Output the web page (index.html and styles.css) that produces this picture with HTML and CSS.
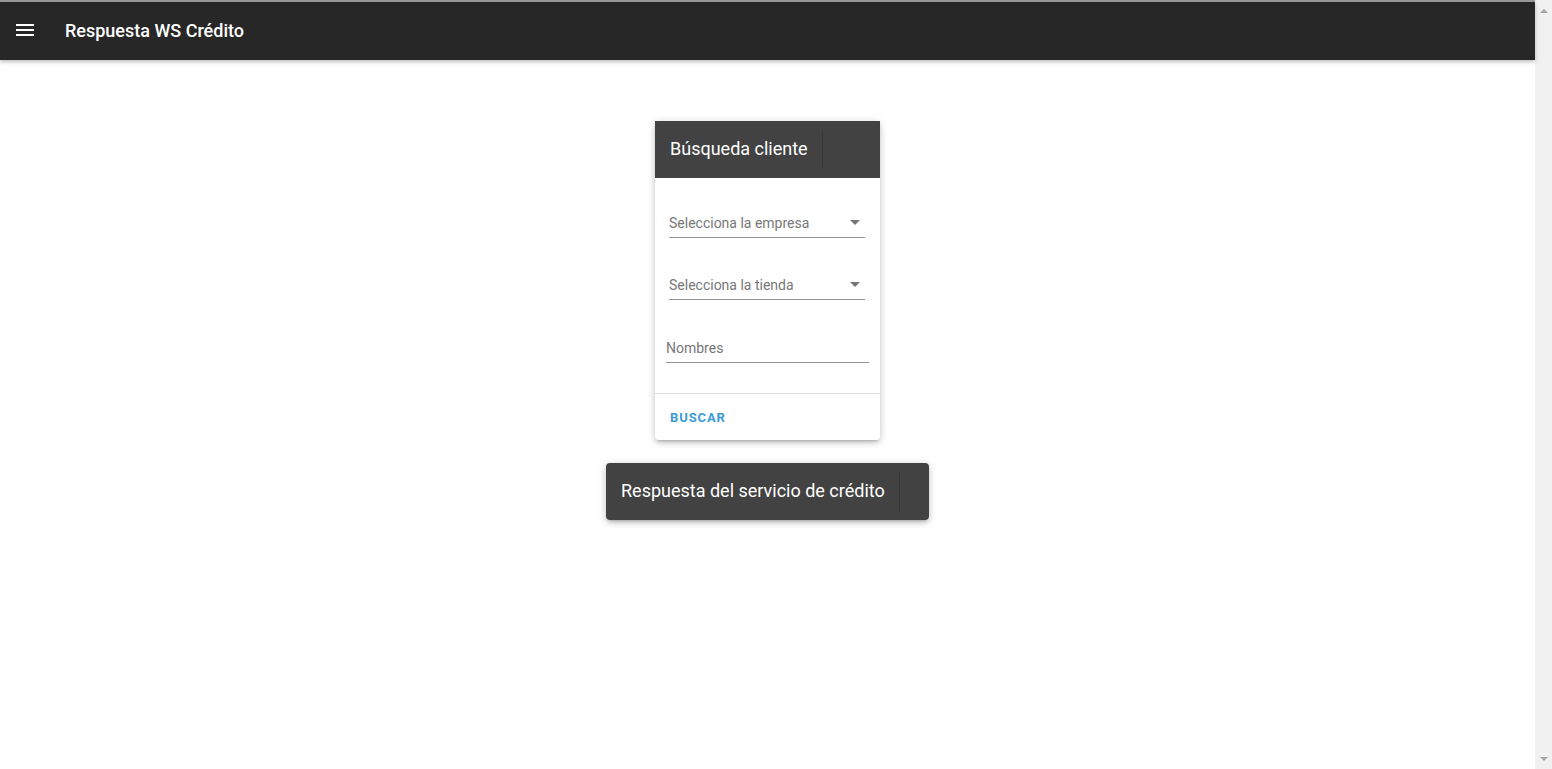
FILE: index.html
```html
<!DOCTYPE html>
<html lang="es">
<head>
<meta charset="utf-8">
<title>Respuesta WS Crédito</title>
<link rel="stylesheet" href="styles.css">
</head>
<body>
<div class="window">
  <div class="app">
    <header class="toolbar">
      <button class="menu-btn" aria-label="menu">
        <svg width="24" height="24" viewBox="0 0 24 24"><path fill="#fff" d="M3 18h18v-2H3v2zm0-5h18v-2H3v2zm0-7v2h18V6H3z"/></svg>
      </button>
      <span class="toolbar-title">Respuesta WS Crédito</span>
    </header>
    <main class="content">
      <section class="card search-card">
        <div class="card-header"><span class="card-title">Búsqueda cliente</span></div>
        <div class="card-body">
          <div class="field select-field"><span class="field-label">Selecciona la empresa</span><span class="arrow"></span></div>
          <div class="field select-field"><span class="field-label">Selecciona la tienda</span><span class="arrow"></span></div>
          <div class="field input-field"><span class="field-label">Nombres</span></div>
        </div>
        <div class="card-footer"><span class="btn-text">BUSCAR</span></div>
      </section>
      <section class="card result-card">
        <div class="card-header"><span class="card-title">Respuesta del servicio de crédito</span></div>
      </section>
    </main>
  </div>
  <div class="scrollbar">
    <span class="sb-arrow up"></span>
    <span class="sb-track"></span>
    <span class="sb-arrow down"></span>
  </div>
</div>
</body>
</html>
```
FILE: styles.css
```css
* { box-sizing: border-box; }
html, body { margin: 0; padding: 0; height: 100%; }
body {
  font-family: Roboto, "Noto Sans", "Liberation Sans", sans-serif;
  background: #fff;
  overflow: hidden;
}
.window {
  display: flex;
  height: 769px;
}
.app {
  flex: 1;
  display: flex;
  flex-direction: column;
  border-top: 2px solid #9a9a9a;
}
.toolbar {
  height: 58px;
  background: #272727;
  display: flex;
  align-items: center;
  padding-left: 13px;
  padding-bottom: 2px;
  box-shadow: 0 2px 4px rgba(0,0,0,0.25);
  position: relative;
  z-index: 2;
}
.menu-btn {
  background: none;
  border: 0;
  padding: 0;
  width: 24px;
  height: 24px;
  display: flex;
}
.toolbar-title {
  color: #fff;
  font-size: 18px;
  font-weight: 500;
  margin-left: 28px;
  letter-spacing: 0;
}
.content {
  flex: 1;
  display: flex;
  flex-direction: column;
  align-items: center;
  padding-top: 61px;
}
.card {
  background: #fff;
  border-radius: 4px;
  box-shadow: 0 3px 3px -2px rgba(0,0,0,0.2), 0 3px 6px 0 rgba(0,0,0,0.14), 0 1px 10px 0 rgba(0,0,0,0.12);
  overflow: hidden;
}
.search-card { width: 225px; border-radius: 0 0 4px 4px; }
.result-card { width: 323px; margin-top: 23px; }
.card-header {
  height: 57px;
  background: #424242;
  display: flex;
  align-items: center;
  padding-left: 15px;
}
.card-title {
  color: #fff;
  font-size: 18px;
  font-weight: 400;
  padding-right: 14px;
  padding-bottom: 3px;
  border-right: 1px solid #363636;
  height: 38px;
  display: flex;
  align-items: center;
}
.card-body {
  padding: 34px 0 30px;
  display: flex;
  flex-direction: column;
  gap: 36px;
}
.field {
  height: 26px;
  display: flex;
  align-items: center;
  padding-bottom: 3px;
  border-bottom: 1px solid #949494;
}
.select-field { margin: 0 15px 0 14px; }
.input-field { margin: 37px 11px 0; }
.select-field + .input-field { margin-top: 1px; }
.field-label {
  flex: 1;
  font-size: 14px;
  color: #777;
  line-height: 20px;
}
.arrow {
  width: 0; height: 0;
  border-left: 5px solid transparent;
  border-right: 5px solid transparent;
  border-top: 5px solid #757575;
  margin-right: 5px;
  margin-bottom: 1px;
}
.card-footer {
  height: 47px;
  border-top: 1px solid #e0e0e0;
  display: flex;
  align-items: center;
  padding-left: 15px;
}
.btn-text {
  color: #3a9bd7;
  font-size: 13px;
  font-weight: 700;
  letter-spacing: 0.9px;
}
.scrollbar {
  width: 17px;
  background: #f1f1f1;
  display: flex;
  flex-direction: column;
  align-items: center;
}
.sb-track { flex: 1; }
.sb-arrow {
  width: 0; height: 0;
  border-left: 4px solid transparent;
  border-right: 4px solid transparent;
  margin: 9px 0 8px;
}
.sb-arrow.up { border-bottom: 4px solid #a3a3a3; }
.sb-arrow.down { border-top: 4px solid #a3a3a3; }
```
